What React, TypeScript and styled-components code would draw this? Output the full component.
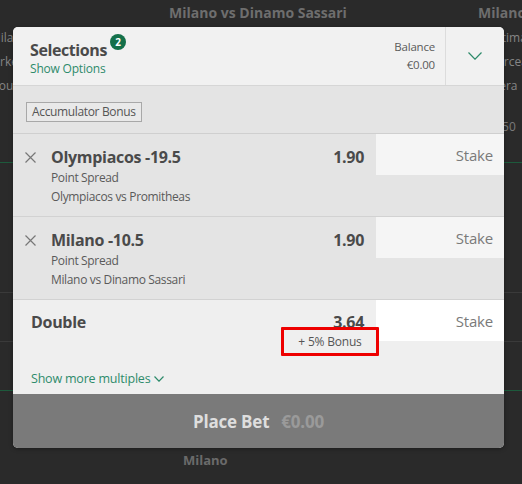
import React from 'react';
import styled, { createGlobalStyle } from 'styled-components';

const GlobalStyle = createGlobalStyle`
  html, body {
    margin: 0;
    padding: 0;
    background: #2a2a2a;
  }
  body {
    font-family: 'Open Sans', 'Noto Sans', sans-serif;
  }
`;

const SPage = styled.div`
  position: relative;
  width: 522px;
  height: 484px;
  overflow: hidden;
  background: #2a2a2a;
`;

/* background event board behind the bet slip */
const SBoard = styled.div`
  display: grid;
  grid-template-columns: 248px 440px 240px;
  margin-left: -210px;
`;

const SBoardCol = styled.div<{ $align: 'left' | 'center' | 'right' }>`
  display: flex;
  flex-direction: column;
  text-align: ${({ $align }) => $align};
`;

const SBoardTitle = styled.div`
  height: 26px;
  line-height: 26px;
  font-weight: 700;
  font-size: 14px;
  color: #6e6e6e;
  white-space: nowrap;
`;

const SBoardLine = styled.div`
  height: 24px;
  line-height: 24px;
  font-size: 12px;
  color: #858585;
  padding: 0 10px 0 12px;
  white-space: nowrap;
`;

const SBoardRow = styled.div<{ $h: number; $line: string }>`
  height: ${({ $h }) => $h}px;
  border-bottom: 1px solid ${({ $line }) => $line};
  font-size: 12px;
  line-height: 14px;
  color: #7a7a7a;
  padding: 22px 8px 0 14px;
  box-sizing: border-box;
`;

const SBoardFoot = styled.div`
  margin-top: 60px;
  padding-left: 145px;
  font-weight: 700;
  font-size: 13px;
  line-height: 18px;
  color: #6a6a6a;
  text-align: left;
`;

/* the bet slip */
const SSlip = styled.div`
  position: absolute;
  left: 13px;
  top: 27px;
  width: 491px;
  height: 421px;
  border-radius: 5px;
  overflow: hidden;
  background: #e4e4e4;
  display: flex;
  flex-direction: column;
  box-shadow: 0 1px 4px rgba(0, 0, 0, 0.35);
  color: #4a4a4a;
`;

const SHead = styled.div`
  display: grid;
  grid-template-columns: 1fr 59px;
  height: 59px;
  box-sizing: border-box;
  background: #f1f1f1;
  border-bottom: 1px solid #d6d6d6;
  flex-shrink: 0;
`;

const SHeadMain = styled.div`
  display: flex;
  align-items: flex-start;
  justify-content: space-between;
  padding: 12px 10px 0 17px;
`;

const STitleBlock = styled.div`
  display: flex;
  flex-direction: column;
`;

const STitleRow = styled.div`
  display: flex;
  align-items: flex-start;
`;

const STitle = styled.div`
  font-size: 16px;
  font-weight: 700;
  color: #4a4a4a;
  line-height: 22px;
  letter-spacing: -0.4px;
`;

const SBadge = styled.span`
  width: 16px;
  height: 16px;
  border-radius: 50%;
  background: #14704a;
  color: #fff;
  font-size: 10px;
  font-weight: 700;
  display: grid;
  place-items: center;
  margin: -5px 0 0 3px;
`;

const SGreenLink = styled.span<{ $size?: number }>`
  font-size: ${({ $size = 12 }) => $size}px;
  color: #2e8b6b;
  line-height: 16px;
  display: inline-flex;
  align-items: center;
  gap: 4px;
  letter-spacing: -0.2px;
`;

const SBalance = styled.div`
  align-self: center;
  display: flex;
  flex-direction: column;
  align-items: flex-end;
  font-size: 11.5px;
  color: #5a5a5a;
  line-height: 18px;
  margin-top: -12px;
  letter-spacing: -0.2px;
`;

const SChevronCell = styled.div`
  display: grid;
  place-items: center;
  border-left: 1px solid #dcdcdc;
`;

const SBonusBar = styled.div`
  height: 48px;
  padding: 13px 13px 0;
  box-sizing: border-box;
  border-bottom: 1px solid #cfcfcf;
  flex-shrink: 0;
`;

const STag = styled.span`
  display: inline-block;
  border: 1px solid #a8a8a8;
  background: #e9e9e9;
  font-size: 12px;
  color: #555;
  padding: 0 5px;
  line-height: 18px;
  letter-spacing: -0.35px;
`;

const SBetRow = styled.div<{ $bg: string; $h: number }>`
  display: grid;
  grid-template-columns: 38px 1fr 128px;
  height: ${({ $h }) => $h}px;
  background: ${({ $bg }) => $bg};
  border-bottom: 1px solid #d2d2d2;
  flex-shrink: 0;
  box-sizing: border-box;
`;

const SRemove = styled.div`
  display: flex;
  justify-content: flex-start;
  padding: 18px 0 0 12px;
`;

const SBetInfo = styled.div`
  display: flex;
  flex-direction: column;
  padding: 12px 12px 0 0;
`;

const SBetTop = styled.div`
  display: flex;
  justify-content: space-between;
  align-items: baseline;
`;

const SBetName = styled.div`
  font-size: 16px;
  font-weight: 700;
  color: #4a4a4a;
  line-height: 22px;
  letter-spacing: -0.3px;
`;

const SOdds = styled.div`
  font-size: 16px;
  font-weight: 700;
  color: #4a4a4a;
  line-height: 22px;
  letter-spacing: -0.3px;
`;

const SSub = styled.div`
  font-size: 12px;
  color: #5a5a5a;
  line-height: 19px;
  letter-spacing: -0.35px;
`;

const SStake = styled.div<{ $bg: string }>`
  height: 41px;
  background: ${({ $bg }) => $bg};
  display: flex;
  align-items: center;
  justify-content: flex-end;
  padding-right: 11px;
  font-size: 15px;
  color: #7a7a7a;
  letter-spacing: -0.2px;
`;

const SMultiple = styled.div`
  background: #efefef;
  flex: 1;
  min-height: 0;
  overflow: hidden;
  display: flex;
  flex-direction: column;
`;

const SMultipleRow = styled.div`
  display: grid;
  grid-template-columns: 1fr 128px;
  align-items: start;
`;

const SMultipleInfo = styled.div`
  display: flex;
  flex-direction: column;
  padding: 11px 12px 0 18px;
`;

const SBonus = styled.div`
  position: relative;
  align-self: flex-end;
  margin: -6px -15px 0 0;
  border: 3px solid #ee0000;
  border-radius: 1px;
  width: 98px;
  height: 29px;
  box-sizing: border-box;
  display: flex;
  align-items: center;
  justify-content: center;
  font-size: 12px;
  color: #555;
  letter-spacing: -0.2px;
`;

const SMore = styled.div`
  padding: 10px 18px 0;
`;

const SPlaceBet = styled.div`
  height: 54px;
  background: #7a7a7a;
  display: flex;
  align-items: center;
  justify-content: center;
  gap: 12px;
  font-size: 17px;
  font-weight: 700;
  flex-shrink: 0;
  letter-spacing: -0.2px;
`;

const SPlaceLabel = styled.span`
  color: #dedede;
`;

const SPlaceAmount = styled.span`
  color: #9a9a9a;
`;

const Cross = () => (
  <svg width="11" height="11" viewBox="0 0 11 11">
    <path d="M0.5 0.5 L10.5 10.5 M10.5 0.5 L0.5 10.5" stroke="#777" strokeWidth="1.2" />
  </svg>
);

const Chevron = ({ w, h }: { w: number; h: number }) => (
  <svg width={w} height={h} viewBox={`0 0 ${w} ${h}`}>
    <path d={`M0.5 0.5 L${w / 2} ${h - 0.8} L${w - 0.5} 0.5`} stroke="#2e8b6b" strokeWidth="1.2" fill="none" />
  </svg>
);

const bets = [
  { name: 'Olympiacos -19.5', odds: '1.90', market: 'Point Spread', event: 'Olympiacos vs Promitheas' },
  { name: 'Milano -10.5', odds: '1.90', market: 'Point Spread', event: 'Milano vs Dinamo Sassari' },
];

export default function App() {
  return (
    <SPage>
      <GlobalStyle />
      <SBoard>
        <SBoardCol $align="right">
          <SBoardTitle>&nbsp;</SBoardTitle>
          <SBoardLine>Milano</SBoardLine>
          <SBoardLine>Markets</SBoardLine>
          <SBoardLine>Round</SBoardLine>
          <SBoardRow $h={65} $line="#1d5a3c" />
          <SBoardRow $h={130} $line="#3a3a3a" />
          <SBoardRow $h={49} $line="#3a3a3a" />
          <SBoardRow $h={49} $line="#1d5a3c" />
        </SBoardCol>
        <SBoardCol $align="center">
          <SBoardTitle>Milano vs Dinamo Sassari</SBoardTitle>
          <SBoardLine>&nbsp;</SBoardLine>
          <SBoardLine>&nbsp;</SBoardLine>
          <SBoardLine>&nbsp;</SBoardLine>
          <SBoardRow $h={65} $line="#2a2a2a" />
          <SBoardRow $h={130} $line="#2a2a2a" />
          <SBoardRow $h={49} $line="#2a2a2a" />
          <SBoardRow $h={49} $line="#2a2a2a" />
          <SBoardFoot>Milano</SBoardFoot>
        </SBoardCol>
        <SBoardCol $align="left">
          <SBoardTitle>Milano vs Pesaro</SBoardTitle>
          <SBoardLine>Ultima</SBoardLine>
          <SBoardLine>Mircea</SBoardLine>
          <SBoardLine>Fiera</SBoardLine>
          <SBoardRow $h={65} $line="#1d5a3c">1.50</SBoardRow>
          <SBoardRow $h={130} $line="#3a3a3a" />
          <SBoardRow $h={49} $line="#3a3a3a" />
          <SBoardRow $h={49} $line="#1d5a3c" />
        </SBoardCol>
      </SBoard>

      <SSlip>
        <SHead>
          <SHeadMain>
            <STitleBlock>
              <STitleRow>
                <STitle>Selections</STitle>
                <SBadge>2</SBadge>
              </STitleRow>
              <SGreenLink>Show Options</SGreenLink>
            </STitleBlock>
            <SBalance>
              <span>Balance</span>
              <span>€0.00</span>
            </SBalance>
          </SHeadMain>
          <SChevronCell>
            <Chevron w={14} h={8} />
          </SChevronCell>
        </SHead>

        <SBonusBar>
          <STag>Accumulator Bonus</STag>
        </SBonusBar>

        {bets.map((b) => (
          <SBetRow key={b.name} $bg="#e4e4e4" $h={83}>
            <SRemove>
              <Cross />
            </SRemove>
            <SBetInfo>
              <SBetTop>
                <SBetName>{b.name}</SBetName>
                <SOdds>{b.odds}</SOdds>
              </SBetTop>
              <SSub>{b.market}</SSub>
              <SSub>{b.event}</SSub>
            </SBetInfo>
            <SStake $bg="#f5f5f5">Stake</SStake>
          </SBetRow>
        ))}

        <SMultiple>
          <SMultipleRow>
            <SMultipleInfo>
              <SBetTop>
                <SBetName>Double</SBetName>
                <SOdds>3.64</SOdds>
              </SBetTop>
              <SBonus>+ 5% Bonus</SBonus>
            </SMultipleInfo>
            <SStake $bg="#ffffff">Stake</SStake>
          </SMultipleRow>
          <SMore>
            <SGreenLink $size={12.5}>
              Show more multiples
              <Chevron w={10} h={6} />
            </SGreenLink>
          </SMore>
        </SMultiple>

        <SPlaceBet>
          <SPlaceLabel>Place Bet</SPlaceLabel>
          <SPlaceAmount>€0.00</SPlaceAmount>
        </SPlaceBet>
      </SSlip>
    </SPage>
  );
}
